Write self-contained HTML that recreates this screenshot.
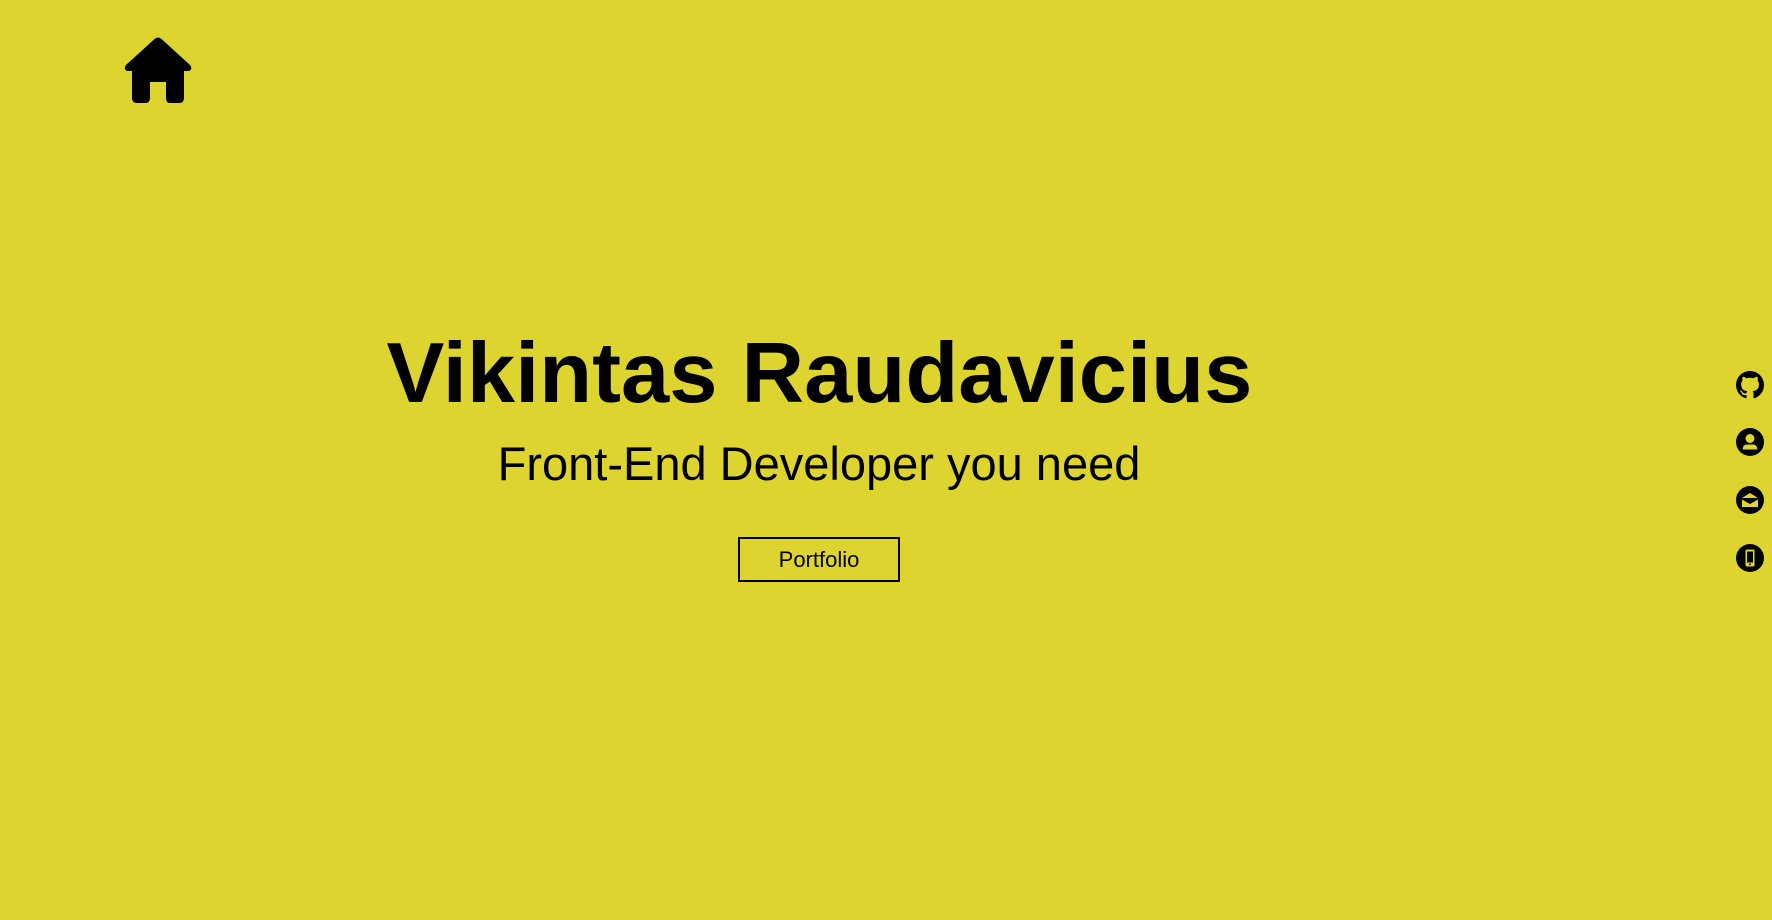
<!DOCTYPE html>
<html><head><meta charset="utf-8"><style>
html,body{margin:0;padding:0}
body{width:1772px;height:920px;background:#ddd42f;position:relative;overflow:hidden;font-family:"Liberation Sans",sans-serif;color:#000}
.c{position:absolute;left:0;width:1638px;text-align:center;white-space:nowrap}
.c span{display:inline-block}
#t{top:319px;font-size:85px;font-weight:bold;line-height:110px}
#t span{transform:scaleX(1.02)}
#s{top:433px;font-size:47px;line-height:62px}
#b{position:absolute;left:738px;top:537px;width:158px;height:41px;border:2px solid #000;font-size:22px;line-height:41px;text-align:center}
.ic{position:absolute;left:1736px;width:28px;height:28px}
</style></head><body>
<svg style="position:absolute;left:123px;top:36px" width="70" height="68" viewBox="0 0 70 68">
<path d="M31.5 3 Q35 0 38.5 3 L67 29 Q70 33 66 35 L61 35 L61 62 Q61 67 56 67 L47 67 Q43 67 43 62 L43 46 L27 46 L27 62 Q27 67 22 67 L14 67 Q9 67 9 62 L9 35 L4 35 Q0 33 3 29 Z" fill="#000"/>
</svg>
<div class="c" id="t"><span>Vikintas Raudavicius</span></div>
<div class="c" id="s"><span>Front-End Developer you need</span></div>
<div id="b">Portfolio</div>
<svg class="ic" style="top:371px" viewBox="0 0 16 16"><path fill="#000" d="M8 0C3.58 0 0 3.58 0 8c0 3.54 2.29 6.530 5.47 7.59.4.07.55-.17.55-.38 0-.19-.01-.82-.01-1.49-2.01.37-2.530-.49-2.69-.94-.09-.23-.48-.94-.82-1.13-.28-.15-.68-.52-.01-.53.63-.01 1.08.58 1.23.82.72 1.21 1.87.87 2.33.66.07-.52.28-.87.51-1.07-1.78-.2-3.64-.89-3.64-3.95 0-.87.31-1.59.82-2.15-.08-.2-.36-1.02.08-2.12 0 0 .67-.21 2.2.82.64-.18 1.32-.27 2-.27.68 0 1.36.09 2 .27 1.53-1.04 2.2-.82 2.2-.82.44 1.1.16 1.92.08 2.12.51.56.82 1.27.82 2.15 0 3.07-1.87 3.75-3.65 3.95.29.25.54.73.54 1.48 0 1.07-.01 1.93-.01 2.2 0 .21.15.46.55.38A8.01 8.01 0 0016 8c0-4.42-3.58-8-8-8z"/></svg>
<svg class="ic" style="top:428px" viewBox="0 0 28 28"><circle cx="14" cy="14" r="14" fill="#000"/><circle cx="14" cy="10.5" r="4.5" fill="#ddd42f"/><path d="M6.5 21.5 Q7 16.5 11 16.5 L17 16.5 Q21 16.5 21.5 21.5 Z" fill="#ddd42f"/></svg>
<svg class="ic" style="top:486px" viewBox="0 0 28 28"><circle cx="14" cy="14" r="14" fill="#000"/><path d="M6 12 L14 7 L22 12 Z" fill="#ddd42f"/><path d="M6 13.5 L14 18 L22 13.5 L22 21 L6 21 Z" fill="#ddd42f"/></svg>
<svg class="ic" style="top:544px" viewBox="0 0 28 28"><circle cx="14" cy="14" r="14" fill="#000"/><rect x="9.5" y="5.5" width="9" height="17" rx="1.5" fill="#ddd42f"/><rect x="11" y="7.5" width="6" height="11" fill="#000"/><circle cx="14" cy="20.3" r="0.9" fill="#000"/></svg>
</body></html>
